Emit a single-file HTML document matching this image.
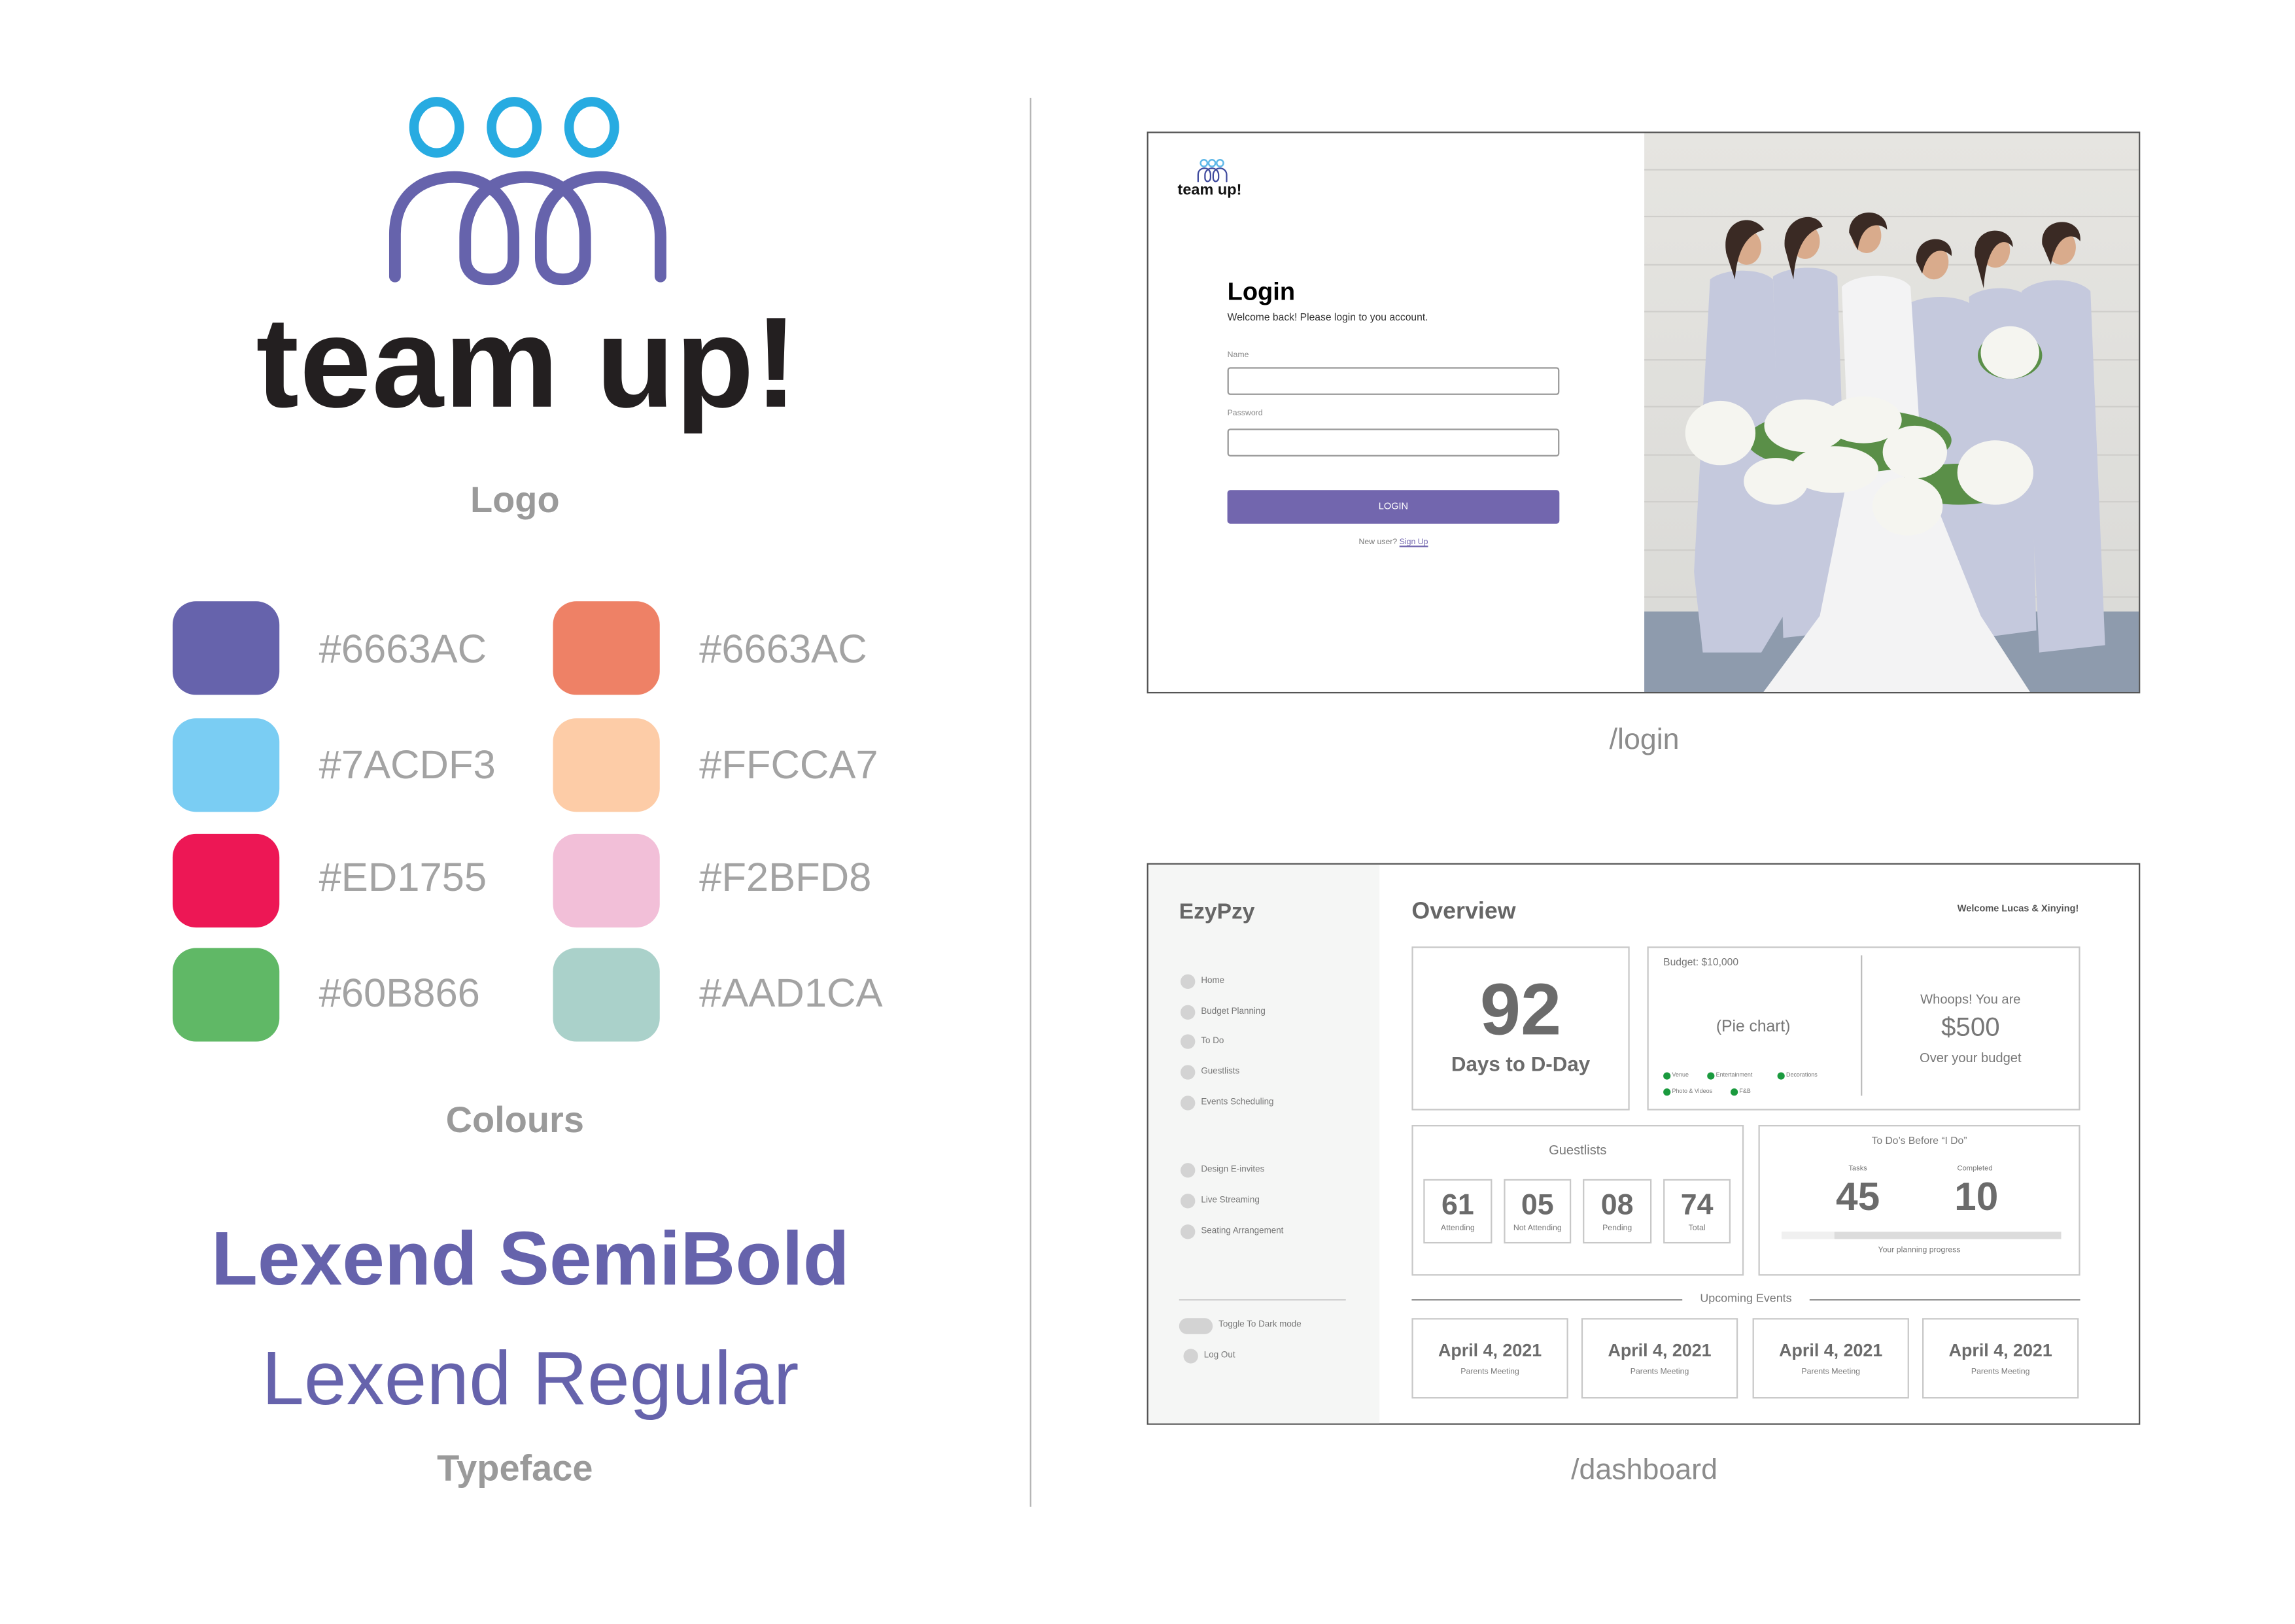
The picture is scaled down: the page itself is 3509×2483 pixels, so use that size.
<!DOCTYPE html>
<html><head><meta charset="utf-8">
<style>
html,body{margin:0;padding:0;background:#fff;}
body{width:3509px;height:2481px;overflow:hidden;position:relative;}
#s{position:absolute;left:0;top:0;width:1569px;height:1110px;transform:scale(2.2367);transform-origin:0 0;font-family:"Liberation Sans",sans-serif;}
#s div{position:absolute;white-space:nowrap;}
.c{text-align:center;}
.hex{font-size:27.5px;color:#a3a3a3;line-height:30px;}
.sw{width:73px;height:64px;border-radius:16px;}
.n{font-family:"Liberation Sans Narrow","Liberation Sans",sans-serif;color:#777;}
.box{border:1px solid #c8c8c8;box-sizing:border-box;background:#fff;}
.dot{width:10px;height:10px;border-radius:50%;background:#d3d3d3;}
.g{width:5px;height:5px;border-radius:50%;background:#1a9a3e;}
</style></head><body><div id="s">

<svg style="position:absolute;left:0;top:0" width="700" height="300" viewBox="0 0 700 300">
<g fill="none" stroke="#27abe1" stroke-width="6.5">
<ellipse cx="298.5" cy="87" rx="15.5" ry="17.5"/>
<ellipse cx="351.5" cy="87" rx="15.5" ry="17.5"/>
<ellipse cx="404.5" cy="87" rx="15.5" ry="17.5"/>
</g>
<path d="M270,189 V160 C270,134 288,121 310.5,121 C333,121 351,136 351,162 V176 C351,186 344,191 334.6,191 C325,191 318,186 318,176 V162 C318,136 337,121 359.4,121 C382,121 400,136 400,162 V176 C400,186 393,191 384.8,191 C376,191 369.7,186 369.7,176 V162 C369.7,136 388,121 410.6,121 C433,121 451.5,136 451.5,162 V189" fill="none" stroke="#6663ac" stroke-width="8" stroke-linecap="round" stroke-linejoin="round"/>
</svg>
<div style="left:175px;top:198px;font-size:88px;font-weight:bold;color:#231f20;letter-spacing:0.5px;line-height:100px;">team up!</div>
<div class="c" style="left:252px;width:200px;top:328px;font-size:25px;font-weight:bold;color:#9a9a9a;">Logo</div>

<div class="sw" style="left:118px;top:411px;background:#6663ac"></div>
<div class="sw" style="left:118px;top:491px;background:#7acdf3"></div>
<div class="sw" style="left:118px;top:570px;background:#ed1755"></div>
<div class="sw" style="left:118px;top:648px;background:#60b866"></div>
<div class="sw" style="left:378px;top:411px;background:#ee8166"></div>
<div class="sw" style="left:378px;top:491px;background:#fdcca7"></div>
<div class="sw" style="left:378px;top:570px;background:#f2bfd8"></div>
<div class="sw" style="left:378px;top:648px;background:#aad1ca"></div>
<div class="hex" style="left:218px;top:429px">#6663AC</div>
<div class="hex" style="left:218px;top:508px">#7ACDF3</div>
<div class="hex" style="left:218px;top:585px">#ED1755</div>
<div class="hex" style="left:218px;top:664px">#60B866</div>
<div class="hex" style="left:478px;top:429px">#6663AC</div>
<div class="hex" style="left:478px;top:508px">#FFCCA7</div>
<div class="hex" style="left:478px;top:585px">#F2BFD8</div>
<div class="hex" style="left:478px;top:664px">#AAD1CA</div>
<div class="c" style="left:202px;width:300px;top:752px;font-size:25px;font-weight:bold;color:#9a9a9a;">Colours</div>

<div class="c" style="left:100px;width:525px;top:830px;font-size:52px;font-weight:bold;color:#6663ac;line-height:62px;">Lexend SemiBold</div>
<div class="c" style="left:100px;width:525px;top:912px;font-size:52px;color:#6663ac;line-height:62px;">Lexend Regular</div>
<div class="c" style="left:202px;width:300px;top:990px;font-size:25px;font-weight:bold;color:#9a9a9a;">Typeface</div>

<div style="left:704px;top:67px;width:1px;height:963px;background:#b5b5b5"></div>

<div style="left:784px;top:90px;width:679px;height:384px;border:1px solid #555;box-sizing:border-box;background:#fff;overflow:hidden">
 <svg style="position:absolute;left:0;top:0" width="80" height="50" viewBox="0 0 80 50">
  <g fill="none" stroke="#5fb8e8" stroke-width="1.1"><circle cx="38" cy="20.5" r="2.3"/><circle cx="43.5" cy="20.5" r="2.3"/><circle cx="49" cy="20.5" r="2.3"/></g>
  <path d="M34,33 V28.5 C34,25.5 36,24 38.5,24 C41,24 42.5,26 42.5,28.5 V30.5 C42.5,32 41.5,33 40.5,33 C39.5,33 38.7,32 38.7,30.5 V28.5 C38.7,26 41,24 43.5,24 C46,24 48,26 48,28.5 V30.5 C48,32 47,33 46,33 C45,33 44.3,32 44.3,30.5 V28.5 C44.3,26 46.5,24 49,24 C51.5,24 53.5,26 53.5,28.5 V33" fill="none" stroke="#3f4a9e" stroke-width="1" stroke-linecap="round"/>
 </svg>
 <div style="left:20px;top:33px;font-size:10.5px;font-weight:bold;color:#111">team up!</div>
 <div style="left:54px;top:99px;font-size:17px;font-weight:bold;color:#000">Login</div>
 <div style="left:54px;top:123px;font-size:7px;color:#333">Welcome back! Please login to you account.</div>
 <div style="left:54px;top:149px;font-size:5.5px;color:#888">Name</div>
 <div style="left:54px;top:160px;width:227px;height:19px;border:1px solid #999;border-radius:2px;box-sizing:border-box"></div>
 <div style="left:54px;top:189px;font-size:5.5px;color:#888">Password</div>
 <div style="left:54px;top:202px;width:227px;height:19px;border:1px solid #999;border-radius:2px;box-sizing:border-box"></div>
 <div class="c" style="left:54px;top:244px;width:227px;height:23px;background:#7266ae;border-radius:2px;color:#fff;font-size:6.5px;line-height:23px">LOGIN</div>
 <div class="c" style="left:54px;width:227px;top:277px;font-size:5.5px;color:#777">New user? <span style="color:#7266ae;text-decoration:underline">Sign Up</span></div>
 <svg style="position:absolute;left:339px;top:0" width="340" height="384" viewBox="0 0 340 384">
  <defs><linearGradient id="w" x1="0" y1="0" x2="0" y2="1"><stop offset="0" stop-color="#e6e5e1"/><stop offset="1" stop-color="#d9d9d6"/></linearGradient></defs>
  <rect width="340" height="384" fill="url(#w)"/>
  <g stroke="#cfcecb" stroke-width="1"><line x1="0" y1="25" x2="340" y2="25"/><line x1="0" y1="57" x2="340" y2="57"/><line x1="0" y1="90" x2="340" y2="90"/><line x1="0" y1="122" x2="340" y2="122"/><line x1="0" y1="155" x2="340" y2="155"/><line x1="0" y1="187" x2="340" y2="187"/><line x1="0" y1="220" x2="340" y2="220"/><line x1="0" y1="252" x2="340" y2="252"/><line x1="0" y1="285" x2="340" y2="285"/><line x1="0" y1="317" x2="340" y2="317"/></g>
  <rect y="327" width="340" height="57" fill="#8e9bad"/>
  <g fill="#c5c9dd">
   <path d="M45,100 C55,92 80,92 88,100 L95,330 L80,355 L40,355 L34,300 Z"/>
   <path d="M88,98 C100,90 125,90 132,98 L140,340 L95,345 Z"/>
   <path d="M178,118 C190,110 215,110 225,118 L238,340 L190,345 Z"/>
   <path d="M222,112 C232,104 255,104 262,112 L268,340 L230,345 Z"/>
   <path d="M258,108 C270,98 295,98 305,108 L315,350 L270,355 Z"/>
  </g>
  <path d="M135,105 C145,95 175,95 182,105 L190,230 L230,330 L265,384 L80,384 L120,330 L140,230 Z" fill="#f3f3f4"/>
  <g fill="#d9ab8c"><ellipse cx="70" cy="78" rx="10" ry="12"/><ellipse cx="110" cy="74" rx="10" ry="12"/><ellipse cx="152" cy="70" rx="10" ry="12"/><ellipse cx="198" cy="88" rx="10" ry="12"/><ellipse cx="240" cy="80" rx="10" ry="12"/><ellipse cx="285" cy="78" rx="10" ry="12"/></g>
  <g fill="#3a2a24"><path d="M56,82 C52,58 74,54 82,66 C76,68 64,72 62,100 Z"/><path d="M96,78 C94,56 118,52 122,64 C116,66 104,70 102,100 Z"/><path d="M140,68 C140,50 166,50 166,66 C160,60 148,62 146,80 Z"/><path d="M186,88 C184,68 212,68 210,84 C204,78 194,78 190,96 Z"/><path d="M226,84 C224,62 252,62 252,78 C246,70 234,74 232,106 Z"/><path d="M272,76 C270,56 300,56 298,74 C294,68 282,68 278,90 Z"/></g>
  <g fill="#5a8f48"><ellipse cx="140" cy="210" rx="70" ry="22"/><ellipse cx="250" cy="152" rx="22" ry="16"/><ellipse cx="215" cy="240" rx="40" ry="14"/></g>
  <g fill="#f5f5f0"><ellipse cx="52" cy="205" rx="24" ry="22"/><ellipse cx="110" cy="200" rx="28" ry="18"/><ellipse cx="150" cy="196" rx="26" ry="16"/><ellipse cx="130" cy="230" rx="30" ry="16"/><ellipse cx="185" cy="218" rx="22" ry="18"/><ellipse cx="180" cy="255" rx="24" ry="20"/><ellipse cx="240" cy="232" rx="26" ry="22"/><ellipse cx="250" cy="150" rx="20" ry="18"/><ellipse cx="90" cy="238" rx="22" ry="16"/></g>
 </svg>
</div>
<div class="c" style="left:1024px;width:200px;top:495px;font-size:20px;color:#8c8c8c;">/login</div>

<div style="left:784px;top:590px;width:679px;height:384px;border:1px solid #555;box-sizing:border-box;background:#fff;overflow:hidden">
 <div style="left:0;top:0;width:158px;height:384px;background:#f5f6f5"></div>
 <div class="n" style="left:21px;top:24px;font-size:15px;font-weight:bold;color:#666">EzyPzy</div>
 <div class="n" style="left:180px;top:24px;font-size:16px;font-weight:bold;color:#666">Overview</div>
 <div class="n" style="left:480px;width:156px;text-align:right;top:27px;font-size:6.5px;font-weight:bold;color:#555">Welcome Lucas &amp; Xinying!</div>

 <div class="dot" style="left:22px;top:75px"></div><div class="n" style="left:36px;top:77px;font-size:6px">Home</div>
 <div class="dot" style="left:22px;top:96px"></div><div class="n" style="left:36px;top:98px;font-size:6px">Budget Planning</div>
 <div class="dot" style="left:22px;top:116px"></div><div class="n" style="left:36px;top:118px;font-size:6px">To Do</div>
 <div class="dot" style="left:22px;top:137px"></div><div class="n" style="left:36px;top:139px;font-size:6px">Guestlists</div>
 <div class="dot" style="left:22px;top:158px"></div><div class="n" style="left:36px;top:160px;font-size:6px">Events Scheduling</div>
 <div class="dot" style="left:22px;top:204px"></div><div class="n" style="left:36px;top:206px;font-size:6px">Design E-invites</div>
 <div class="dot" style="left:22px;top:225px"></div><div class="n" style="left:36px;top:227px;font-size:6px">Live Streaming</div>
 <div class="dot" style="left:22px;top:246px"></div><div class="n" style="left:36px;top:248px;font-size:6px">Seating Arrangement</div>
 <div style="left:21px;top:297px;width:114px;height:1px;background:#ccc"></div>
 <div style="left:21px;top:310px;width:23px;height:11px;border-radius:6px;background:#d3d3d3"></div><div class="n" style="left:48px;top:312px;font-size:6px">Toggle To Dark mode</div>
 <div class="dot" style="left:24px;top:331px"></div><div class="n" style="left:38px;top:333px;font-size:6px">Log Out</div>

 <div class="box" style="left:180px;top:56px;width:149px;height:112px"></div>
 <div class="c n" style="left:180px;width:149px;top:72px;font-size:50px;font-weight:bold;color:#6b6b6b;line-height:55px">92</div>
 <div class="c n" style="left:180px;width:149px;top:128px;font-size:14px;font-weight:bold;color:#6b6b6b">Days to D-Day</div>
 <div class="box" style="left:341px;top:56px;width:296px;height:112px"></div>
 <div style="left:487px;top:62px;width:1px;height:96px;background:#bbb"></div>
 <div class="n" style="left:352px;top:64px;font-size:7px">Budget: $10,000</div>
 <div class="c n" style="left:341px;width:145px;top:105px;font-size:11px">(Pie chart)</div>
 <div class="g" style="left:352px;top:142px"></div><div class="n" style="left:358px;top:141px;font-size:4px">Venue</div>
 <div class="g" style="left:382px;top:142px"></div><div class="n" style="left:388px;top:141px;font-size:4px">Entertainment</div>
 <div class="g" style="left:430px;top:142px"></div><div class="n" style="left:436px;top:141px;font-size:4px">Decorations</div>
 <div class="g" style="left:352px;top:153px"></div><div class="n" style="left:358px;top:152px;font-size:4px">Photo &amp; Videos</div>
 <div class="g" style="left:398px;top:153px"></div><div class="n" style="left:404px;top:152px;font-size:4px">F&amp;B</div>
 <div class="c n" style="left:488px;width:148px;top:87px;font-size:9px">Whoops! You are</div>
 <div class="c n" style="left:488px;width:148px;top:101px;font-size:18px">$500</div>
 <div class="c n" style="left:488px;width:148px;top:127px;font-size:9px">Over your budget</div>
 <div class="box" style="left:180px;top:178px;width:227px;height:103px"></div>
 <div class="c n" style="left:180px;width:227px;top:190px;font-size:9px">Guestlists</div>
 <div class="box" style="left:188px;top:215px;width:47px;height:44px"></div>
 <div class="box" style="left:243px;top:215px;width:46px;height:44px"></div>
 <div class="box" style="left:297px;top:215px;width:47px;height:44px"></div>
 <div class="box" style="left:352px;top:215px;width:46px;height:44px"></div>
 <div class="c n" style="left:188px;width:47px;top:222px;font-size:20px;font-weight:bold;color:#6b6b6b">61</div>
 <div class="c n" style="left:243px;width:46px;top:222px;font-size:20px;font-weight:bold;color:#6b6b6b">05</div>
 <div class="c n" style="left:297px;width:47px;top:222px;font-size:20px;font-weight:bold;color:#6b6b6b">08</div>
 <div class="c n" style="left:352px;width:46px;top:222px;font-size:20px;font-weight:bold;color:#6b6b6b">74</div>
 <div class="c n" style="left:188px;width:47px;top:246px;font-size:5.5px">Attending</div>
 <div class="c n" style="left:243px;width:46px;top:246px;font-size:5.5px">Not Attending</div>
 <div class="c n" style="left:297px;width:47px;top:246px;font-size:5.5px">Pending</div>
 <div class="c n" style="left:352px;width:46px;top:246px;font-size:5.5px">Total</div>
 <div class="box" style="left:417px;top:178px;width:220px;height:103px"></div>
 <div class="c n" style="left:417px;width:220px;top:186px;font-size:7px">To Do’s Before “I Do”</div>
 <div class="c n" style="left:465px;width:40px;top:205px;font-size:5px">Tasks</div>
 <div class="c n" style="left:545px;width:40px;top:205px;font-size:5px">Completed</div>
 <div class="c n" style="left:455px;width:60px;top:212px;font-size:27px;font-weight:bold;color:#6b6b6b">45</div>
 <div class="c n" style="left:536px;width:60px;top:212px;font-size:27px;font-weight:bold;color:#6b6b6b">10</div>
 <div style="left:433px;top:251px;width:191px;height:5px;background:#dcdcdc"></div>
 <div style="left:433px;top:251px;width:36px;height:5px;background:#f0f0f0"></div>
 <div class="c n" style="left:417px;width:220px;top:261px;font-size:5.5px">Your planning progress</div>
 <div style="left:180px;top:297px;width:185px;height:1px;background:#888"></div>
 <div style="left:452px;top:297px;width:185px;height:1px;background:#888"></div>
 <div class="c n" style="left:365px;width:87px;top:292px;font-size:8px">Upcoming Events</div>
 <div class="box" style="left:180px;top:310px;width:107px;height:55px"></div>
 <div class="box" style="left:296px;top:310px;width:107px;height:55px"></div>
 <div class="box" style="left:413px;top:310px;width:107px;height:55px"></div>
 <div class="box" style="left:529px;top:310px;width:107px;height:55px"></div>
 <div class="c n" style="left:180px;width:107px;top:325px;font-size:12px;font-weight:bold;color:#6b6b6b">April 4, 2021</div>
 <div class="c n" style="left:296px;width:107px;top:325px;font-size:12px;font-weight:bold;color:#6b6b6b">April 4, 2021</div>
 <div class="c n" style="left:413px;width:107px;top:325px;font-size:12px;font-weight:bold;color:#6b6b6b">April 4, 2021</div>
 <div class="c n" style="left:529px;width:107px;top:325px;font-size:12px;font-weight:bold;color:#6b6b6b">April 4, 2021</div>
 <div class="c n" style="left:180px;width:107px;top:344px;font-size:5.5px">Parents Meeting</div>
 <div class="c n" style="left:296px;width:107px;top:344px;font-size:5.5px">Parents Meeting</div>
 <div class="c n" style="left:413px;width:107px;top:344px;font-size:5.5px">Parents Meeting</div>
 <div class="c n" style="left:529px;width:107px;top:344px;font-size:5.5px">Parents Meeting</div>
</div>
<div class="c" style="left:974px;width:300px;top:994px;font-size:20px;color:#8c8c8c;">/dashboard</div>

</div></body></html>
